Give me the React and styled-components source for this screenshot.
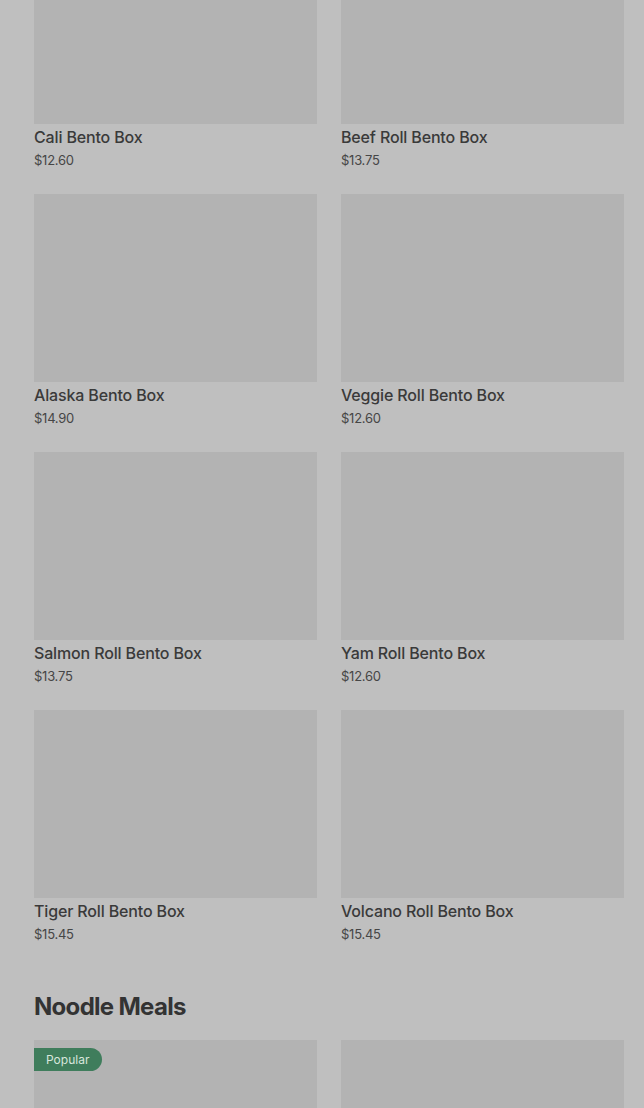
import React from "react";
import styled, { createGlobalStyle } from "styled-components";

const Global = createGlobalStyle`
  html, body { margin: 0; padding: 0; background: #bfbfbf; overflow: hidden; }
  body { font-family: Inter, "Noto Sans", sans-serif; }
`;

const Page = styled.div`
  padding: 0 20px 0 34px;
  margin-top: -64px;
`;

const Grid = styled.div`
  display: grid;
  grid-template-columns: 1fr 1fr;
  column-gap: 24px;
  row-gap: 24px;
`;

const Card = styled.div`
  display: flex;
  flex-direction: column;
`;

const Thumb = styled.div`
  position: relative;
  height: 188px;
  background: #b3b3b3;
`;

const Title = styled.div`
  margin-top: 3px;
  font-size: 16px;
  line-height: 20px;
  font-weight: 500;
  color: #3a3a3a;
  letter-spacing: -0.15px;
`;

const Price = styled.div`
  margin-top: 3px;
  font-size: 13px;
  line-height: 20px;
  color: #464646;
  letter-spacing: -0.25px;
`;

const Heading = styled.h2`
  margin: 47px 0 17px;
  font-size: 24px;
  line-height: 32px;
  font-weight: 700;
  color: #333;
  letter-spacing: -0.7px;
`;

const Badge = styled.span`
  position: absolute;
  left: 0;
  top: 8px;
  height: 23px;
  padding: 0 13px 0 12px;
  display: flex;
  align-items: center;
  background: #3f7d5c;
  color: #d8e6dd;
  font-size: 12px;
  border-radius: 0 12px 12px 0;
`;

const bento = [
  ["Cali Bento Box", "$12.60"],
  ["Beef Roll Bento Box", "$13.75"],
  ["Alaska Bento Box", "$14.90"],
  ["Veggie Roll Bento Box", "$12.60"],
  ["Salmon Roll Bento Box", "$13.75"],
  ["Yam Roll Bento Box", "$12.60"],
  ["Tiger Roll Bento Box", "$15.45"],
  ["Volcano Roll Bento Box", "$15.45"],
];

export default function App() {
  return (
    <>
      <Global />
      <Page>
        <Grid>
          {bento.map(([t, p]) => (
            <Card key={t}>
              <Thumb />
              <Title>{t}</Title>
              <Price>{p}</Price>
            </Card>
          ))}
        </Grid>
        <Heading>Noodle Meals</Heading>
        <Grid>
          <Card>
            <Thumb>
              <Badge>Popular</Badge>
            </Thumb>
          </Card>
          <Card>
            <Thumb />
          </Card>
        </Grid>
      </Page>
    </>
  );
}
